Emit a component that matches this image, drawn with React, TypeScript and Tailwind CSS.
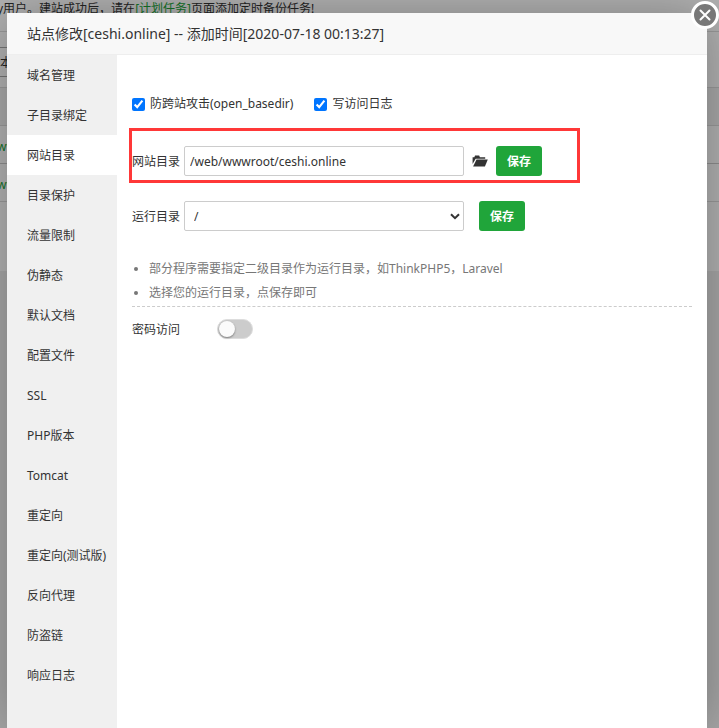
import { useState } from "react";

const menu = [
  "域名管理",
  "子目录绑定",
  "网站目录",
  "目录保护",
  "流量限制",
  "伪静态",
  "默认文档",
  "配置文件",
  "SSL",
  "PHP版本",
  "Tomcat",
  "重定向",
  "重定向(测试版)",
  "反向代理",
  "防盗链",
  "响应日志",
];

function SaveButton() {
  return (
    <button
      type="button"
      className="h-[30px] w-[46px] shrink-0 rounded-[3px] bg-[#20a53a] pt-0.5 text-center text-xs font-bold text-white hover:bg-[#10952a]"
    >
      保存
    </button>
  );
}

function FolderIcon() {
  return (
    <svg width="16" height="14" viewBox="0 0 16 14" fill="#333" aria-hidden="true">
      <path d="M.6 10V3.2h1.8l.6-1.7h4.2l.7 1.7h5.3v1.5H3.7L.6 10Z" />
      <path d="M4.5 5.6h11.3l-2.9 6.9H1.1L4.5 5.6Z" />
    </svg>
  );
}

/* The site list that stays visible around the dialog. */
function SiteList() {
  return (
    <div aria-hidden="true" className="absolute inset-0 overflow-hidden bg-[#efefef] text-[#333]">
      <div className="h-[271px] bg-white text-xs whitespace-nowrap">
        <div className="h-8 border-b border-[#ddd] leading-[18px]">
          <div className="-ml-[3px]">
            y用户。建站成功后，请在<span className="text-[#20a53a]">[计划任务]</span>页面添加定时备份任务!
          </div>
        </div>
        <div className="flex h-14 flex-col justify-between pt-[15px]">
          <div className="h-[30px] w-[90px] border-y border-[#aaa] leading-[30px]">本</div>
          <div className="border-b border-[#ddd]" />
        </div>
        <div className="h-[38px] border-b border-[#ddd] bg-[#f3f3f3]" />
        <div className="h-[38px] border-b border-[#ccc] leading-[42px] text-[#20a53a]">
          <div className="-ml-[3px]">www</div>
        </div>
        <div className="h-[38px] border-b border-[#ddd] leading-[42px] text-[#20a53a]">
          <div className="-ml-[3px]">www</div>
        </div>
      </div>
    </div>
  );
}

export default function App() {
  const [active, setActive] = useState("网站目录");
  const [locked, setLocked] = useState(false);

  return (
    <div className="relative flex min-h-screen overflow-hidden font-['Noto_Sans','Noto_Sans_CJK_SC',sans-serif] text-xs text-[#333]">
      <SiteList />
      <div className="relative flex flex-1 bg-black/30 pt-[13px] pr-3 pl-[7px]">
        <section
          role="dialog"
          aria-labelledby="dialog-title"
          className="relative flex min-w-0 flex-1 flex-col bg-white shadow-[1px_1px_50px_rgba(0,0,0,0.3)]"
        >
          <header className="h-[42px] border-b border-[#eee] bg-[#f8f8f8] px-5">
            <h1 id="dialog-title" className="text-sm leading-[42px]">
              站点修改[ceshi.online] -- 添加时间[2020-07-18 00:13:27]
            </h1>
          </header>
          <button
            type="button"
            aria-label="关闭"
            className="absolute -top-3 -right-3 flex size-7 items-center justify-center rounded-full border-[3px] border-white bg-[#787878] text-white"
          >
            <svg width="12" height="12" viewBox="0 0 12 12" stroke="currentColor" strokeWidth="2" strokeLinecap="round" aria-hidden="true">
              <path d="M1.5 1.5l9 9M10.5 1.5l-9 9" />
            </svg>
          </button>

          <div className="flex flex-1">
            <nav className="w-[110px] shrink-0 bg-[#f0f0f0]">
              {menu.map((item) => (
                <button
                  key={item}
                  type="button"
                  onClick={() => setActive(item)}
                  className={
                    item === active
                      ? "block h-10 w-full bg-white pt-0.5 pl-5 text-left whitespace-nowrap"
                      : "block h-10 w-full pt-0.5 pl-5 text-left whitespace-nowrap"
                  }
                >
                  {item}
                </button>
              ))}
            </nav>

            <main className="min-w-0 flex-1 px-[15px] pt-10">
              <div className="flex h-[18px] items-center gap-[21px]">
                <label className="flex items-center gap-[5px]">
                  <input type="checkbox" defaultChecked className="size-[13px] accent-[#0075ff]" />
                  防跨站攻击(open_basedir)
                </label>
                <label className="flex items-center gap-[5px]">
                  <input type="checkbox" defaultChecked className="size-[13px] accent-[#0075ff]" />
                  写访问日志
                </label>
              </div>

              <div className="mt-[15px] -ml-[3px] flex w-[451px] items-center border-[3px] border-[#ff3838] pt-[15px] pb-1">
                <label htmlFor="site-path" className="w-[52px] shrink-0 pt-0.5">
                  网站目录
                </label>
                <input
                  id="site-path"
                  type="text"
                  defaultValue="/web/wwwroot/ceshi.online"
                  className="h-[30px] w-[280px] rounded-xs border border-[#ccc] bg-white px-[5px]"
                />
                <button type="button" aria-label="选择目录" className="mx-2">
                  <FolderIcon />
                </button>
                <SaveButton />
              </div>

              <div className="mt-[18px] flex items-center">
                <label htmlFor="run-path" className="w-[52px] shrink-0 pt-0.5">
                  运行目录
                </label>
                <div className="relative mr-[15px] w-[280px]">
                  <select
                    id="run-path"
                    className="block h-[30px] w-full appearance-none rounded-xs border border-[#ccc] bg-white px-[9px] pt-0.5"
                  >
                    <option>/</option>
                  </select>
                  <svg
                    className="pointer-events-none absolute top-3 right-1"
                    width="10"
                    height="7"
                    viewBox="0 0 10 7"
                    fill="none"
                    stroke="#333"
                    strokeWidth="2"
                    aria-hidden="true"
                  >
                    <path d="M1 1.2l4 4 4-4" />
                  </svg>
                </div>
                <SaveButton />
              </div>

              <ul className="mt-[26px] list-disc border-b border-dashed border-[#ccc] pb-px pl-[17px] leading-6 text-[#777]">
                <li>部分程序需要指定二级目录作为运行目录，如ThinkPHP5，Laravel</li>
                <li>选择您的运行目录，点保存即可</li>
              </ul>

              <label className="mt-3 flex w-[121px] cursor-pointer items-center justify-between">
                <span className="pt-0.5">密码访问</span>
                <input
                  type="checkbox"
                  role="switch"
                  checked={locked}
                  onChange={(e) => setLocked(e.target.checked)}
                  className="peer sr-only"
                />
                <span className="flex h-5 w-9 rounded-full border border-[#ddd] bg-[#ccc] p-px peer-checked:justify-end peer-checked:bg-[#20a53a]">
                  <span className="size-4 rounded-full bg-[#fbfbfb] shadow-[0_1px_2px_rgba(0,0,0,0.4)]" />
                </span>
              </label>
            </main>
          </div>
        </section>
      </div>
    </div>
  );
}
